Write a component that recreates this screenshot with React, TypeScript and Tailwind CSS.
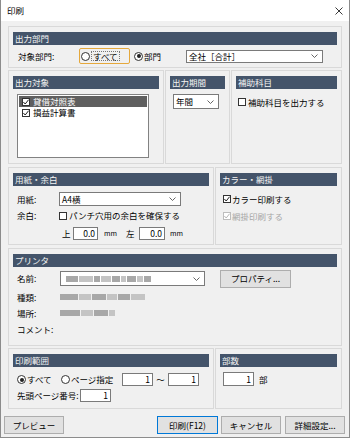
import type { ReactNode } from "react";

const Chevron = () => (
    <svg width="7" height="4" viewBox="0 0 7 4" className="shrink-0">
        <polyline points="0.5,0.5 3.5,3.5 6.5,0.5" fill="none" stroke="#555" strokeWidth="0.9" />
    </svg>
);

const CheckBox = ({ checked, disabled }: { checked?: boolean; disabled?: boolean }) => (
    <span
        className={`flex size-[8px] shrink-0 items-center justify-center border bg-white ${
            disabled ? "border-[#bdbdbd]" : "border-[#333333]"
        }`}
    >
        {checked && (
            <svg width="6" height="6" viewBox="0 0 6 6">
                <polyline
                    points="0.4,3 2.2,5 5.6,0.7"
                    fill="none"
                    stroke={disabled ? "#b5b5b5" : "#222"}
                    strokeWidth="1"
                />
            </svg>
        )}
    </span>
);

const Radio = ({ checked }: { checked?: boolean }) => (
    <span className="flex size-[9px] shrink-0 items-center justify-center rounded-full border border-[#333333] bg-white">
        {checked && <span className="size-[4px] rounded-full bg-[#222222]" />}
    </span>
);

const Group = ({ title, className, children }: { title: string; className?: string; children?: ReactNode }) => (
    <div className={`flex flex-col border border-[#d9d9d9] px-[4px] pt-[5px] ${className ?? ""}`}>
        <div className="h-[13px] shrink-0 bg-[#44546a] pl-[2px] leading-[13px] text-[#f4f4f4]">{title}</div>
        {children}
    </div>
);

const Select = ({ className, children }: { className?: string; children?: ReactNode }) => (
    <div className={`flex items-center justify-between border border-[#7a7a7a] bg-white pl-[2px] pr-[4px] leading-none ${className ?? ""}`}>
        <div className="flex items-center">{children}</div>
        <Chevron />
    </div>
);

const NumBox = ({ value, className }: { value: string; className?: string }) => (
    <div className={`flex h-[13px] items-center justify-end border border-[#7a7a7a] bg-white pr-[2px] leading-none ${className ?? ""}`}>
        {value}
    </div>
);

const Btn = ({ label, className }: { label: string; className?: string }) => (
    <div className={`flex h-[18px] items-center justify-center border bg-[#e1e1e1] leading-none ${className ?? "border-[#adadad]"}`}>
        {label}
    </div>
);

// mosaic-blurred printer info
const Blur = ({ parts }: { parts: number[] }) => (
    <div className="flex items-center gap-[1px] blur-[0.7px]">
        {parts.map((w, i) => (
            <span key={i} className={`h-[6px] ${i % 2 ? "bg-[#c4c4c4]" : "bg-[#a8a8a8]"}`} style={{ width: w }} />
        ))}
    </div>
);

export default function App() {
    return (
        <div className="flex h-[438px] w-[350px] flex-col border border-t-0 border-[#8c8c8c] bg-[#f0f0f0] font-['Noto_Sans_CJK_JP',sans-serif] text-[8.5px] text-black">
            {/* Title bar */}
            <div className="flex h-[21px] shrink-0 items-center justify-between bg-white pl-[6px] pr-[6px] leading-none">
                <span>印刷</span>
                <svg width="8" height="8" viewBox="0 0 8 8">
                    <path d="M0.5 0.5 L7.5 7.5 M7.5 0.5 L0.5 7.5" stroke="#222" strokeWidth="0.9" />
                </svg>
            </div>

            <div className="flex flex-col px-[7px] pt-[5px]">
                {/* 出力部門 */}
                <Group title="出力部門" className="h-[42px]">
                    <div className="mt-[3px] flex h-[16px] items-center leading-none">
                        <span className="w-[66px] shrink-0 pl-[5px]">対象部門:</span>
                        <div className="flex h-[16px] w-[51px] shrink-0 items-center gap-[1px] rounded-[2px] border border-[#e5a83c] pl-[1px]">
                            <Radio />
                            <span className="border border-dotted border-[#777] px-[1px]">すべて</span>
                        </div>
                        <div className="ml-[4px] flex w-[52px] shrink-0 items-center gap-[1px]">
                            <Radio checked />
                            <span>部門</span>
                        </div>
                        <Select className="h-[13px] w-[137px]">全社［合計］</Select>
                    </div>
                </Group>

                {/* 出力対象 / 出力期間 / 補助科目 */}
                <div className="mt-[2px] flex h-[94px] gap-[1px]">
                    <Group title="出力対象" className="w-[156px]">
                        <div className="ml-[4px] mt-[5px] flex h-[64px] w-[132px] flex-col border border-[#828282] bg-white p-[1px] leading-none">
                            <div className="flex h-[11px] items-center gap-[3px] bg-[#5f5f5f] pl-[3px] text-white">
                                <CheckBox checked />
                                <span>貸借対照表</span>
                            </div>
                            <div className="flex h-[11px] items-center gap-[3px] pl-[3px]">
                                <CheckBox checked />
                                <span>損益計算書</span>
                            </div>
                        </div>
                    </Group>
                    <Group title="出力期間" className="w-[65px]">
                        <Select className="ml-[3px] mt-[5px] h-[15px] w-[46px]">年間</Select>
                    </Group>
                    <Group title="補助科目" className="w-[111px]">
                        <div className="mt-[8px] flex h-[10px] items-center gap-[2px] pl-[2px] leading-none">
                            <CheckBox />
                            <span>補助科目を出力する</span>
                        </div>
                    </Group>
                </div>

                {/* 用紙・余白 / カラー・網掛 */}
                <div className="mt-[3px] flex h-[78px] gap-[1px]">
                    <Group title="用紙・余白" className="w-[206px]">
                        <div className="mt-[6px] flex h-[14px] items-center leading-none">
                            <span className="w-[46px] shrink-0 pl-[4px]">用紙:</span>
                            <Select className="h-[14px] w-[122px]">A4横</Select>
                        </div>
                        <div className="mt-[3px] flex h-[13px] items-center leading-none">
                            <span className="w-[46px] shrink-0 pl-[4px]">余白:</span>
                            <CheckBox />
                            <span className="ml-[2px]">パンチ穴用の余白を確保する</span>
                        </div>
                        <div className="mt-[5px] flex h-[13px] items-center pl-[49px] leading-none">
                            <span className="w-[11px] shrink-0">上</span>
                            <NumBox value="0.0" className="w-[25px]" />
                            <span className="ml-[6px] w-[22px] shrink-0 text-[7px]">mm</span>
                            <span className="w-[13px] shrink-0">左</span>
                            <NumBox value="0.0" className="w-[26px]" />
                            <span className="ml-[5px] text-[7px]">mm</span>
                        </div>
                    </Group>
                    <Group title="カラー・網掛" className="w-[127px]">
                        <div className="mt-[8px] flex h-[10px] items-center gap-[1px] pl-[3px] leading-none">
                            <CheckBox checked />
                            <span>カラー印刷する</span>
                        </div>
                        <div className="mt-[7px] flex h-[10px] items-center gap-[1px] pl-[3px] leading-none text-[#a6a6a6]">
                            <CheckBox checked disabled />
                            <span>網掛印刷する</span>
                        </div>
                    </Group>
                </div>

                {/* プリンタ */}
                <Group title="プリンタ" className="mt-[3px] h-[98px]">
                    <div className="mt-[4px] flex h-[15px] items-center leading-none">
                        <span className="w-[47px] shrink-0 pl-[4px]">名前:</span>
                        <Select className="h-[15px] w-[145px]">
                            <div className="pl-[3px]">
                                <Blur parts={[12, 14, 6, 10, 8, 5, 9, 6, 7]} />
                            </div>
                        </Select>
                        <Btn label="プロパティ..." className="ml-[15px] h-[14px] w-[71px] border-[#adadad]" />
                    </div>
                    <div className="mt-[3px] flex h-[16px] items-center leading-none">
                        <span className="w-[47px] shrink-0 pl-[4px]">種類:</span>
                        <Blur parts={[18, 12, 14, 10, 12, 14]} />
                    </div>
                    <div className="flex h-[16px] items-center leading-none">
                        <span className="w-[47px] shrink-0 pl-[4px]">場所:</span>
                        <Blur parts={[20, 12, 14, 6]} />
                    </div>
                    <div className="flex h-[16px] items-center leading-none">
                        <span className="w-[47px] shrink-0 pl-[4px]">コメント:</span>
                    </div>
                </Group>

                {/* 印刷範囲 / 部数 */}
                <div className="mt-[2px] flex h-[61px] gap-[1px]">
                    <Group title="印刷範囲" className="w-[206px]">
                        <div className="mt-[6px] flex h-[13px] items-center pl-[4px] leading-none">
                            <Radio checked />
                            <span className="ml-[1px] w-[34px] shrink-0">すべて</span>
                            <Radio />
                            <span className="ml-[1px] w-[51px] shrink-0">ページ指定</span>
                            <NumBox value="1" className="w-[31px]" />
                            <span className="w-[15px] shrink-0 text-center">～</span>
                            <NumBox value="1" className="w-[31px]" />
                        </div>
                        <div className="mt-[3px] flex h-[13px] items-center pl-[4px] leading-none">
                            <span className="w-[63px] shrink-0">先頭ページ番号:</span>
                            <NumBox value="1" className="w-[31px]" />
                        </div>
                    </Group>
                    <Group title="部数" className="w-[127px]">
                        <div className="mt-[5px] flex h-[14px] items-center pl-[3px] leading-none">
                            <NumBox value="1" className="h-[14px] w-[31px]" />
                            <span className="ml-[5px]">部</span>
                        </div>
                    </Group>
                </div>
            </div>

            {/* Buttons */}
            <div className="mt-[7px] flex pl-[3px] pr-[4px]">
                <Btn label="プレビュー" className="w-[60px] border-[#adadad]" />
                <div className="flex-1" />
                <Btn label="印刷(F12)" className="w-[61px] border-[#0078d7]" />
                <Btn label="キャンセル" className="ml-[3px] w-[60px] border-[#adadad]" />
                <Btn label="詳細設定..." className="ml-[4px] w-[60px] border-[#adadad]" />
            </div>
        </div>
    );
}
